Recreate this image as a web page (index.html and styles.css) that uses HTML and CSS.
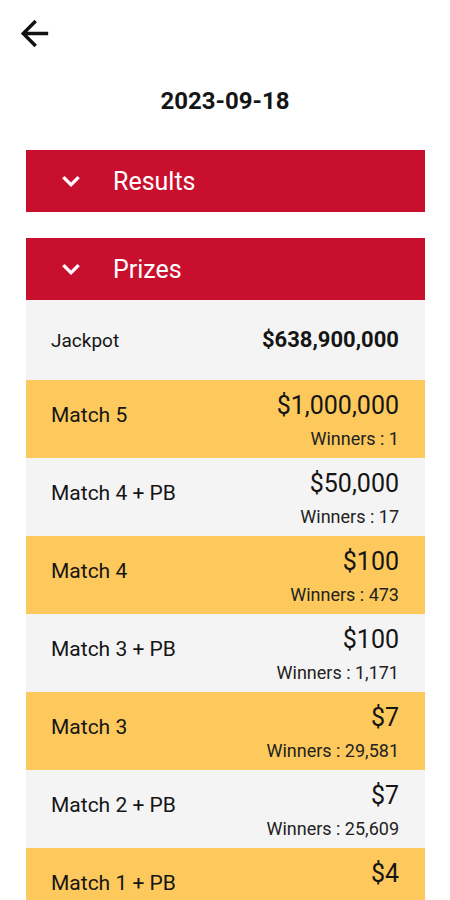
FILE: index.html
```html
<!DOCTYPE html>
<html>

<head>
    <title>Draw 2023-09-18</title>

    <!-- For styling -->
    <link rel="stylesheet" href="styles.css">
</head>

<body>

    <!-- Top bar -->
    <div class="topbar">
        <svg class="back" viewBox="0 0 24 24" width="41" height="41">
            <path d="M20 11H7.83l5.59-5.59L12 4l-8 8 8 8 1.41-1.41L7.83 13H20v-2z" fill="#111"></path>
        </svg>
    </div>

    <h1 class="date">2023-09-18</h1>

    <!-- Results section (collapsed) -->
    <div class="section">
        <div class="section-head">
            <svg class="chev" viewBox="0 0 24 24" width="34" height="34">
                <path d="M16.59 8.59L12 13.17 7.41 8.59 6 10l6 6 6-6z" fill="#fff" stroke="#fff" stroke-width="0.4"></path>
            </svg>
            <span>Results</span>
        </div>
    </div>

    <!-- Prizes section -->
    <div class="section">
        <div class="section-head">
            <svg class="chev" viewBox="0 0 24 24" width="34" height="34">
                <path d="M16.59 8.59L12 13.17 7.41 8.59 6 10l6 6 6-6z" fill="#fff" stroke="#fff" stroke-width="0.4"></path>
            </svg>
            <span>Prizes</span>
        </div>

        <div class="row jackpot">
            <div class="label">Jackpot</div>
            <div class="prize"><div class="amount">$638,900,000</div></div>
        </div>
        <div class="row gold">
            <div class="label">Match 5</div>
            <div class="prize">
                <div class="amount">$1,000,000</div>
                <div class="winners">Winners : 1</div>
            </div>
        </div>
        <div class="row">
            <div class="label">Match 4 + PB</div>
            <div class="prize">
                <div class="amount">$50,000</div>
                <div class="winners">Winners : 17</div>
            </div>
        </div>
        <div class="row gold">
            <div class="label">Match 4</div>
            <div class="prize">
                <div class="amount">$100</div>
                <div class="winners">Winners : 473</div>
            </div>
        </div>
        <div class="row">
            <div class="label">Match 3 + PB</div>
            <div class="prize">
                <div class="amount">$100</div>
                <div class="winners">Winners : 1,171</div>
            </div>
        </div>
        <div class="row gold">
            <div class="label">Match 3</div>
            <div class="prize">
                <div class="amount">$7</div>
                <div class="winners">Winners : 29,581</div>
            </div>
        </div>
        <div class="row">
            <div class="label">Match 2 + PB</div>
            <div class="prize">
                <div class="amount">$7</div>
                <div class="winners">Winners : 25,609</div>
            </div>
        </div>
        <div class="row gold last">
            <div class="label">Match 1 + PB</div>
            <div class="prize">
                <div class="amount">$4</div>
            </div>
        </div>
    </div>

</body>

</html>
```

FILE: styles.css
```css
html,
body {
    height: 900px;
    overflow: hidden;
}

body {
    margin: 0;
    background-color: white;
    font-family: Roboto, "Noto Sans", sans-serif;
    color: #151515;
}

.topbar {
    height: 68px;
    padding-left: 14px;
    padding-top: 13px;
    box-sizing: border-box;
}

.back {
    display: block;
}

.date {
    margin: 0;
    height: 82px;
    padding-top: 18px;
    box-sizing: border-box;
    text-align: center;
    font-size: 24px;
    font-weight: bold;
    line-height: 30px;
}

.section {
    margin: 0 25px 26px 26px;
}

.section-head {
    display: flex;
    align-items: center;
    gap: 25px;
    height: 62px;
    padding-left: 28px;
    background-color: #c8102e;
    color: white;
    font-size: 25px;
}

.chev {
    display: block;
}

.row {
    display: flex;
    align-items: center;
    justify-content: space-between;
    height: 78px;
    padding: 11px 26px 7px 25px;
    box-sizing: border-box;
    background-color: #f4f4f4;
}

.row.gold {
    background-color: #fdc95c;
}

.row.jackpot {
    height: 80px;
    padding-top: 0;
    padding-bottom: 0;
}

.last .prize {
    align-self: flex-start;
}

.label {
    font-size: 21px;
    margin-bottom: 12px;
}

.jackpot .label {
    font-size: 19px;
    margin-bottom: 0;
}

.prize {
    text-align: right;
}

.amount {
    font-size: 25px;
    line-height: 30px;
}

.jackpot .amount {
    font-weight: bold;
    font-size: 22px;
}

.winners {
    margin-top: 6px;
    font-size: 18px;
    line-height: 24px;
    color: #222;
}
```
